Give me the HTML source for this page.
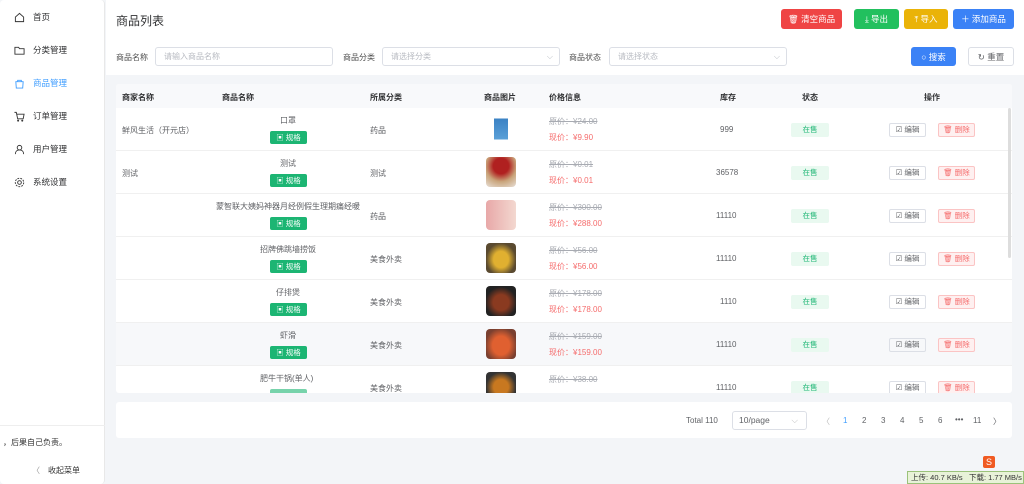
<!DOCTYPE html>
<html><head><meta charset="utf-8"><style>
*{box-sizing:border-box;margin:0;padding:0}
body{width:1024px;height:484px;overflow:hidden;background:#f3f5f8;font-family:"Liberation Sans","Noto Sans CJK SC",sans-serif;font-size:8px;color:#606266;position:relative}
.abs{position:absolute}
.side{left:0;top:0;width:105px;height:484px;background:#fff;border-right:1px solid #e8e8e8;border-radius:4px}
.mi{position:absolute;left:14px;font-size:8.5px;color:#303133;display:flex;align-items:center;gap:8px}
.mi svg{width:11px;height:11px}
.head{left:106px;top:0;width:918px;height:75px;background:#fff}
.btn{position:absolute;height:20px;border-radius:3px;color:#fff;font-size:8.5px;display:flex;align-items:center;justify-content:center}
.inp{position:absolute;top:47px;height:19px;border:1px solid #dcdfe6;border-radius:3px;color:#b8bbc2;font-size:8px;padding-left:8px;line-height:17px;background:#fff}
.lab{position:absolute;top:52px;font-size:8px;color:#505050}
.card{left:116px;top:84px;width:896px;height:309px;background:#fff;overflow:hidden;border-radius:3px}
.th{position:absolute;top:0;left:0;width:896px;height:24px;background:#f8f9fb;font-weight:bold;color:#303133}
.th span{position:absolute;top:8px}
.row{position:absolute;left:0;width:896px;height:43px;border-bottom:1px solid #f0f0f0}
.row>*{position:absolute}
.tag{background:#1cb573;color:#fff;border-radius:2px;width:37px;height:13px;font-size:7.5px;text-align:center;line-height:13px}
.img{width:30px;height:30px;border-radius:4px;left:370px;top:6px}
.op{left:433px;top:8px;color:#a8abb2;text-decoration:line-through}
.np{left:433px;top:24px;color:#f56c6c}
.st{left:675px;top:15px;width:38px;height:14px;background:#e9f9f0;color:#1cb573;text-align:center;line-height:14px;font-size:7.5px;border-radius:2px}
.ed{left:773px;top:15px;width:37px;height:14px;border:1px solid #dcdfe6;border-radius:2px;text-align:center;line-height:12px;font-size:7.5px}
.dl{left:822px;top:15px;width:37px;height:14px;border:1px solid #fbc4c4;background:#fef0f0;color:#f56c6c;border-radius:2px;text-align:center;line-height:12px;font-size:7.5px}
.pg{left:116px;top:402px;width:896px;height:36px;background:#fff;border-radius:3px}
</style></head><body>
<div class="abs side">
 <div class="mi" style="top:11px"><svg viewBox="0 0 12 12" fill="none" stroke="#333"><path d="M1.5 5.5L6 1.5l4.5 4v5h-9z"/></svg>首页</div>
 <div class="mi" style="top:44px"><svg viewBox="0 0 12 12" fill="none" stroke="#333"><path d="M1 2.5h4l1 1.5h5v6H1z"/></svg>分类管理</div>
 <div class="mi" style="top:77px;color:#409eff"><svg viewBox="0 0 12 12" fill="none" stroke="#409eff"><path d="M2 4h8l-.5 7h-7zM4 4V2.5h4V4"/></svg>商品管理</div>
 <div class="mi" style="top:110px"><svg viewBox="0 0 12 12" fill="none" stroke="#333"><path d="M.5 1.5h2l1.5 7h6l1-5H3"/><circle cx="4.5" cy="10.5" r=".6"/><circle cx="9" cy="10.5" r=".6"/></svg>订单管理</div>
 <div class="mi" style="top:143px"><svg viewBox="0 0 12 12" fill="none" stroke="#333"><circle cx="6" cy="4" r="2.5"/><path d="M1.5 11c0-3 2-4.5 4.5-4.5s4.5 1.5 4.5 4.5"/></svg>用户管理</div>
 <div class="mi" style="top:176px"><svg viewBox="0 0 12 12" fill="none" stroke="#333"><circle cx="6" cy="6" r="2"/><circle cx="6" cy="6" r="4.6" stroke-dasharray="2 1.2"/></svg>系统设置</div>
 <div class="abs" style="left:0;top:425px;width:105px;border-top:1px solid #eee"></div>
 <div class="abs" style="left:3px;top:437px;font-size:8px;color:#333">，后果自己负责。</div>
 <div class="abs" style="left:32px;top:465px;font-size:8px;color:#333"><span style="color:#999;margin-right:8px">〈</span>收起菜单</div>
</div>
<div class="abs head">
 <div class="abs" style="left:10px;top:12px;font-size:12px;color:#303133">商品列表</div>
 <div class="btn" style="left:675px;top:9px;width:61px;background:#ef4444">🗑 清空商品</div>
 <div class="btn" style="left:748px;top:9px;width:45px;background:#22c05e">⤓ 导出</div>
 <div class="btn" style="left:798px;top:9px;width:44px;background:#eab308">⤒ 导入</div>
 <div class="btn" style="left:847px;top:9px;width:61px;background:#3b82f6">＋ 添加商品</div>
 <div class="lab" style="left:10px">商品名称</div>
 <div class="inp" style="left:49px;width:178px">请输入商品名称</div>
 <div class="lab" style="left:237px">商品分类</div>
 <div class="inp" style="left:276px;width:178px">请选择分类<span style="position:absolute;right:6px">⌵</span></div>
 <div class="lab" style="left:463px">商品状态</div>
 <div class="inp" style="left:503px;width:178px">请选择状态<span style="position:absolute;right:6px">⌵</span></div>
 <div class="btn" style="left:805px;top:47px;width:45px;height:19px;background:#3b82f6">○ 搜索</div>
 <div class="btn" style="left:862px;top:47px;width:46px;height:19px;background:#fff;border:1px solid #dcdfe6;color:#606266">↻ 重置</div>
</div>
<div class="abs card">
 <div class="th"><span style="left:6px">商家名称</span><span style="left:106px">商品名称</span><span style="left:254px">所属分类</span><span style="left:368px">商品图片</span><span style="left:433px">价格信息</span><span style="left:604px">库存</span><span style="left:686px">状态</span><span style="left:808px">操作</span></div>
 <div class="row" style="top:24px"><span style="left:6px;top:17px">鲜风生活（开元店）</span><span style="left:164px;top:7px">口罩</span><span class="tag" style="left:154px;top:23px">▣ 规格</span><span style="left:254px;top:17px">药品</span><div class="img" style="background:linear-gradient(#fff 15%,#3b82c4 15%,#5aa0d8 85%,#fff 85%);width:14px;left:378px"></div><span class="op">原价：¥24.00</span><span class="np">现价：¥9.90</span><span style="left:604px;top:17px">999</span><span class="st">在售</span><span class="ed">☑ 编辑</span><span class="dl">🗑 删除</span></div>
 <div class="row" style="top:67px"><span style="left:6px;top:17px">测试</span><span style="left:164px;top:7px">测试</span><span class="tag" style="left:154px;top:23px">▣ 规格</span><span style="left:254px;top:17px">测试</span><div class="img" style="background:radial-gradient(circle at 50% 30%,#b02020 30%,#c9a47a 60%,#e8e0d8)"></div><span class="op">原价：¥0.01</span><span class="np">现价：¥0.01</span><span style="left:600px;top:17px">36578</span><span class="st">在售</span><span class="ed">☑ 编辑</span><span class="dl">🗑 删除</span></div>
 <div class="row" style="top:110px"><span style="left:100px;top:7px">蒙智联大姨妈神器月经例假生理期痛经暖</span><span class="tag" style="left:154px;top:23px">▣ 规格</span><span style="left:254px;top:17px">药品</span><div class="img" style="background:linear-gradient(90deg,#e8a8a8,#f3d8d0)"></div><span class="op">原价：¥300.00</span><span class="np">现价：¥288.00</span><span style="left:600px;top:17px">11110</span><span class="st">在售</span><span class="ed">☑ 编辑</span><span class="dl">🗑 删除</span></div>
 <div class="row" style="top:153px"><span style="left:144px;top:7px">招牌佛跳墙捞饭</span><span class="tag" style="left:154px;top:23px">▣ 规格</span><span style="left:254px;top:17px">美食外卖</span><div class="img" style="background:radial-gradient(ellipse at 50% 55%,#e0b030 35%,#5a4a30 70%)"></div><span class="op">原价：¥56.00</span><span class="np">现价：¥56.00</span><span style="left:600px;top:17px">11110</span><span class="st">在售</span><span class="ed">☑ 编辑</span><span class="dl">🗑 删除</span></div>
 <div class="row" style="top:196px"><span style="left:160px;top:7px">仔排煲</span><span class="tag" style="left:154px;top:23px">▣ 规格</span><span style="left:254px;top:17px">美食外卖</span><div class="img" style="background:radial-gradient(circle at 50% 55%,#8a3a20 35%,#222 70%)"></div><span class="op">原价：¥178.00</span><span class="np">现价：¥178.00</span><span style="left:604px;top:17px">1110</span><span class="st">在售</span><span class="ed">☑ 编辑</span><span class="dl">🗑 删除</span></div>
 <div class="row" style="top:239px;background:#f7f8fa"><span style="left:164px;top:7px">虾滑</span><span class="tag" style="left:154px;top:23px">▣ 规格</span><span style="left:254px;top:17px">美食外卖</span><div class="img" style="background:radial-gradient(ellipse at 50% 55%,#e06030 40%,#7a4030 75%)"></div><span class="op">原价：¥159.00</span><span class="np">现价：¥159.00</span><span style="left:600px;top:17px">11110</span><span class="st">在售</span><span class="ed">☑ 编辑</span><span class="dl">🗑 删除</span></div>
 <div class="row" style="top:282px"><span style="left:144px;top:7px">肥牛干锅(单人)</span><span class="tag" style="left:154px;top:23px;opacity:.6"></span><span style="left:254px;top:17px">美食外卖</span><div class="img" style="background:radial-gradient(circle,#c87820 35%,#333 70%)"></div><span class="op">原价：¥38.00</span><span style="left:600px;top:17px">11110</span><span class="st">在售</span><span class="ed">☑ 编辑</span><span class="dl">🗑 删除</span></div>
 <div class="abs" style="left:892px;top:24px;width:3px;height:150px;background:#ddd;border-radius:2px"></div>
</div>
<div class="abs pg">
 <span class="abs" style="left:570px;top:14px">Total 110</span>
 <div class="abs" style="left:616px;top:9px;width:75px;height:19px;border:1px solid #dcdfe6;border-radius:3px;padding-left:6px;line-height:17px;font-size:8.5px">10/page<span style="position:absolute;right:8px;color:#bbb">⌵</span></div>
 <span class="abs" style="left:706px;top:14px;color:#bbb">〈</span>
 <span class="abs" style="left:727px;top:14px;color:#409eff">1</span>
 <span class="abs" style="left:746px;top:14px">2</span>
 <span class="abs" style="left:765px;top:14px">3</span>
 <span class="abs" style="left:784px;top:14px">4</span>
 <span class="abs" style="left:803px;top:14px">5</span>
 <span class="abs" style="left:822px;top:14px">6</span>
 <span class="abs" style="left:839px;top:13px">•••</span>
 <span class="abs" style="left:857px;top:14px">11</span>
 <span class="abs" style="left:877px;top:14px">〉</span>
</div>
<div class="abs" style="left:983px;top:456px;width:12px;height:12px;background:#f05a22;color:#fff;font-size:9px;text-align:center;line-height:12px;border-radius:2px">S</div>
<div class="abs" style="left:907px;top:471px;width:117px;height:13px;background:#e8f2d8;border:1px solid #9bc27a;font-size:7.5px;color:#333;line-height:11px;padding-left:3px">上传: 40.7 KB/s &nbsp; 下载: 1.77 MB/s</div>
</body></html>
